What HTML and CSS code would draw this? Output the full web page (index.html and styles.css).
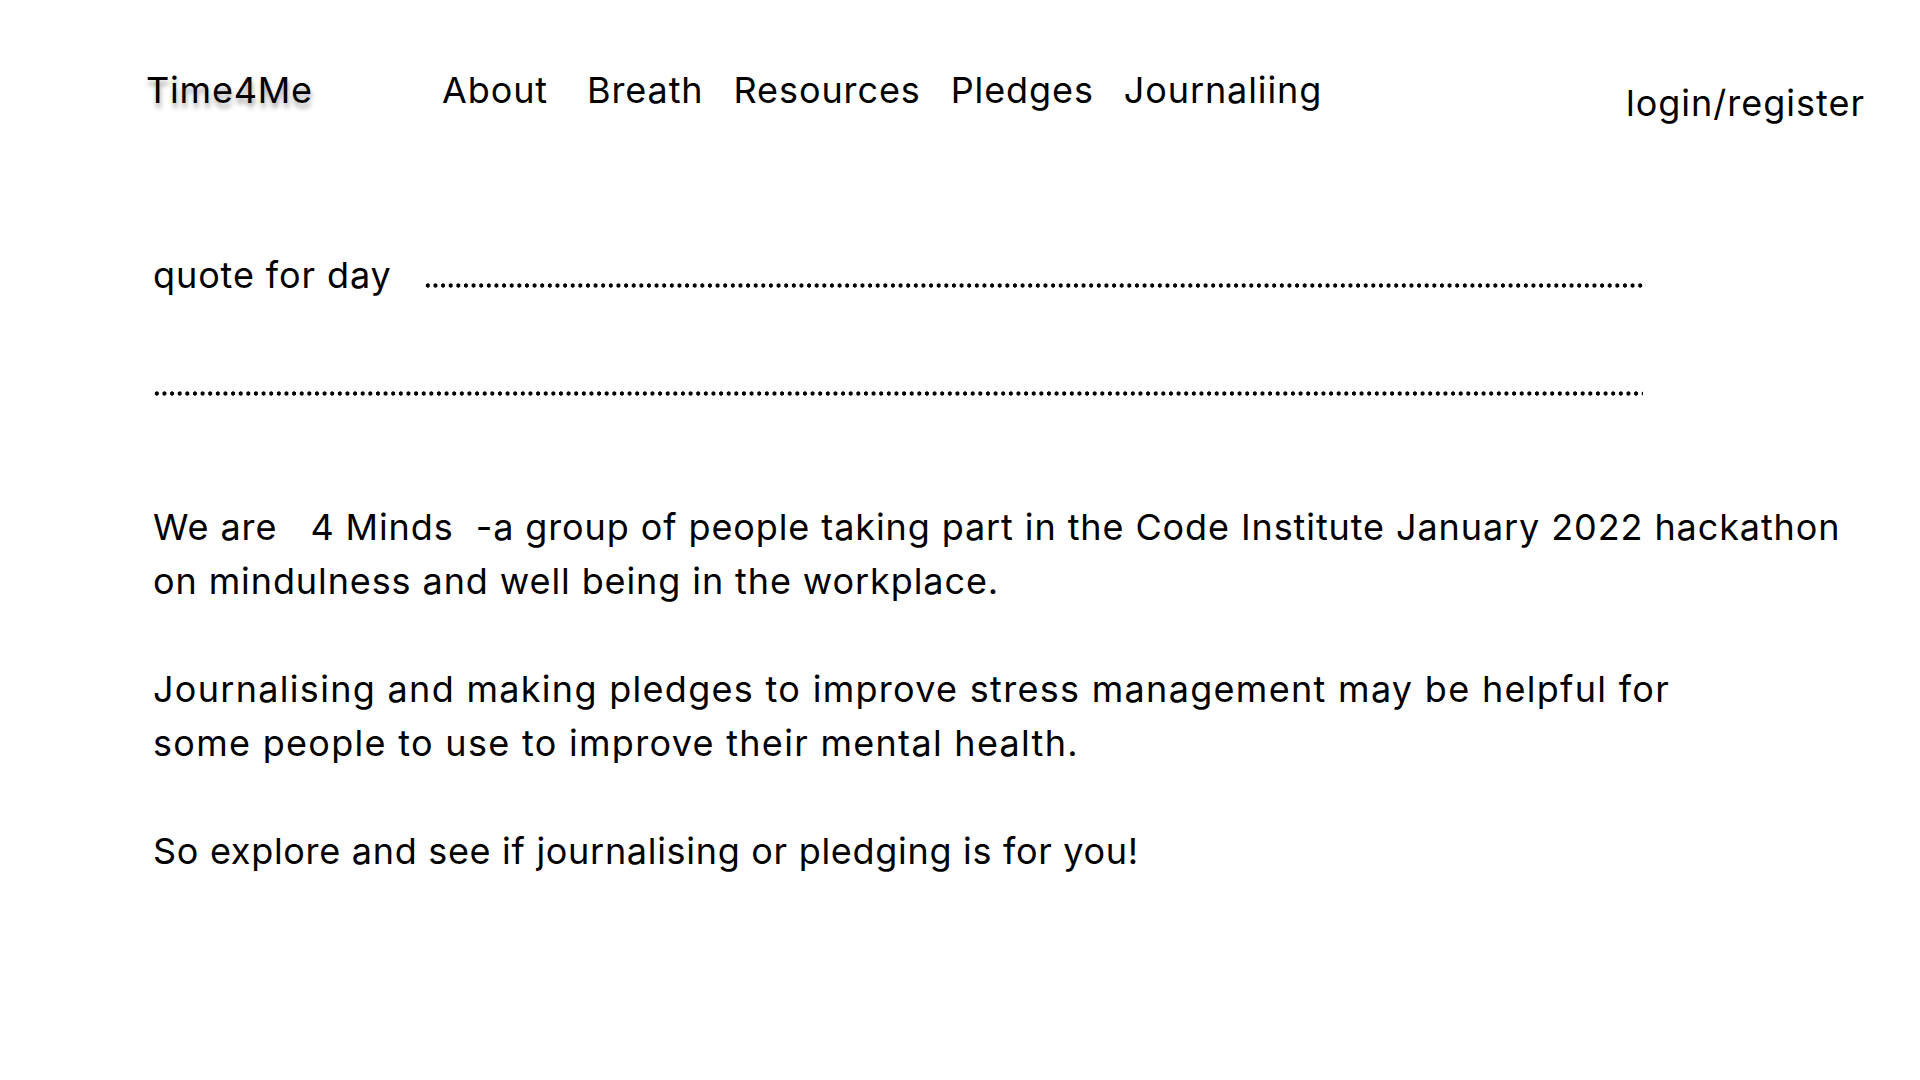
FILE: index.html
```html
<!DOCTYPE html>
<html lang="en">
<head>
<meta charset="utf-8">
<title>Time4Me</title>
<link rel="stylesheet" href="styles.css">
</head>
<body>
<header class="site-header">
  <a class="brand" href="#">Time4Me</a>
  <nav class="main-nav">
    <a class="nav-link nav-about" href="#">About</a>
    <a class="nav-link" href="#">Breath</a>
    <a class="nav-link" href="#">Resources</a>
    <a class="nav-link" href="#">Pledges</a>
    <a class="nav-link" href="#">Journaliing</a>
  </nav>
  <a class="login" href="#">login/register</a>
</header>
<main class="content">
  <section class="quote">
    <div class="quote-row"><span class="quote-label">quote for day</span><span class="dots dots-first"></span></div>
    <div class="quote-row second"><span class="dots dots-second"></span></div>
  </section>
  <p class="text first">We are &nbsp; 4 Minds &nbsp;-a group of people taking part in the Code Institute January 2022 hackathon<br>on mindulness and well being in the workplace.</p>
  <p class="text p2">Journalising and making pledges to improve stress management may be helpful for<br>some people to use to improve their mental health.</p>
  <p class="text p3">So explore and see if journalising or pledging is for you!</p>
</main>
</body>
</html>
```
FILE: styles.css
```css
html, body {
  margin: 0;
  padding: 0;
  background: #ffffff;
}
body {
  font-family: Inter, "Liberation Sans", sans-serif;
  color: #000000;
  white-space: nowrap;
}
a {
  color: #000000;
  text-decoration: none;
}
.site-header {
  display: flex;
  align-items: flex-start;
  padding: 63px 55px 0 146px;
}
.brand {
  width: 296px;
  font-size: 36px;
  line-height: 54px;
  letter-spacing: 0.8px;
  text-shadow: 1px 5px 5px rgba(0, 0, 0, 0.35);
}
.main-nav {
  display: flex;
  gap: 30px;
}
.nav-link {
  font-size: 36px;
  line-height: 54px;
  letter-spacing: 0.9px;
}
.nav-about {
  margin-right: 9px;
}
.login {
  margin-left: auto;
  margin-top: 13px;
  font-size: 36px;
  line-height: 54px;
  letter-spacing: 1px;
}
.content {
  padding-left: 153px;
}
.quote {
  margin-top: 118px;
}
.quote-row {
  font-size: 36px;
  line-height: 54px;
  letter-spacing: 0.9px;
}
.quote-row.second {
  margin-top: 54px;
}
.quote-label {
  display: inline-block;
  width: 271px;
}
.dots {
  display: inline-block;
  height: 5px;
  background-image: radial-gradient(circle at center, #000 1.9px, rgba(0,0,0,0) 2.4px);
  background-size: 7.64px 5px;
  background-repeat: repeat-x;
}
.dots-first {
  width: 1222.4px;
}
.dots-second {
  width: 1489.8px;
}
.text {
  margin: 54px 0 0 0;
  font-size: 36px;
  line-height: 54px;
  letter-spacing: 0.9px;
}
.text.p2 {
  letter-spacing: 1.3px;
}
.text.p3 {
  letter-spacing: 0.7px;
}
.text.first {
  margin-top: 90px;
}
```
